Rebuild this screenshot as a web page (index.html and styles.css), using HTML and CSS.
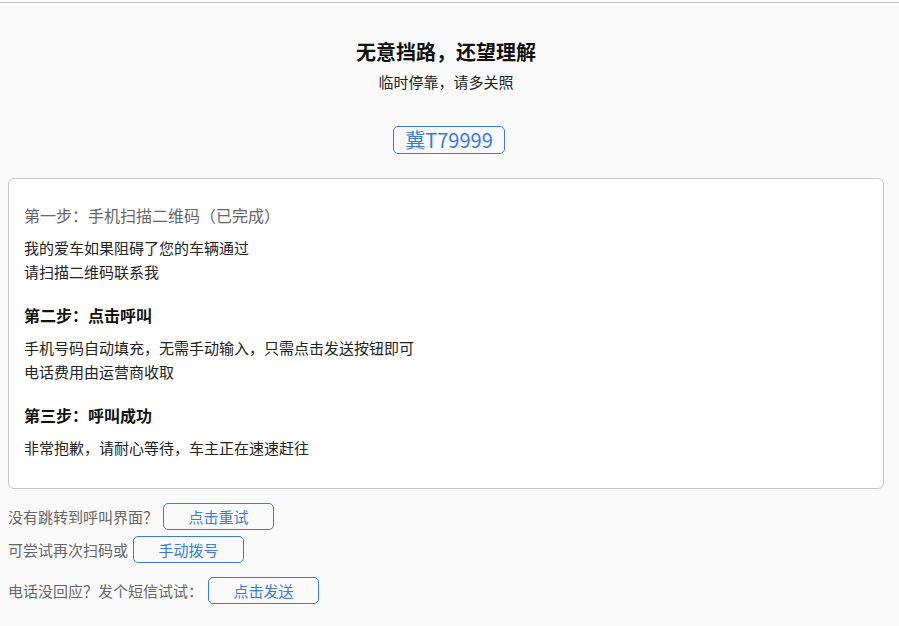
FILE: index.html
```html
<!DOCTYPE html>
<html lang="zh-CN">
<head>
<meta charset="UTF-8">
<meta name="viewport" content="width=device-width, initial-scale=1.0">
<title>挪车</title>
<link rel="stylesheet" href="styles.css">
</head>
<body>
<div class="topline"></div>

<div class="page">
    <div class="header">
        <div class="title">无意挡路，还望理解</div>
        <div class="subtitle">临时停靠，请多关照</div>
        <div class="plate">冀T79999</div>
    </div>

    <div class="card">
        <div class="step">
            <div class="step-title done">第一步：手机扫描二维码（已完成）</div>
            <div class="step-text">我的爱车如果阻碍了您的车辆通过</div>
            <div class="step-text">请扫描二维码联系我</div>
        </div>
        <div class="step">
            <div class="step-title">第二步：点击呼叫</div>
            <div class="step-text">手机号码自动填充，无需手动输入，只需点击发送按钮即可</div>
            <div class="step-text">电话费用由运营商收取</div>
        </div>
        <div class="step">
            <div class="step-title">第三步：呼叫成功</div>
            <div class="step-text">非常抱歉，请耐心等待，车主正在速速赶往</div>
        </div>
    </div>

    <div class="actions">
        <div class="row">没有跳转到呼叫界面？<span class="btn">点击重试</span></div>
        <div class="row">可尝试再次扫码或<span class="btn">手动拨号</span></div>
        <div class="row row-sms">电话没回应？发个短信试试：<span class="btn">点击发送</span></div>
    </div>
</div>
</body>
</html>
```

FILE: styles.css
```css
html, body {
    margin: 0;
    padding: 0;
    background-color: #fafafa;
    font-family: "Noto Sans CJK SC", "Noto Sans", sans-serif;
    color: #222;
}

.topline {
    height: 2px;
    border-bottom: 1px solid #c4c4c4;
}

.page {
    padding: 0 15px 0 8px;
}

.header {
    text-align: center;
    padding-top: 35px;
}

.title {
    font-size: 20px;
    font-weight: bold;
    line-height: 28px;
    color: #111;
}

.subtitle {
    font-size: 15px;
    line-height: 20px;
    margin-top: 6px;
}

.plate {
    display: inline-block;
    margin-top: 34px;
    margin-left: 6px;
    padding: 0 11px;
    font-size: 20px;
    line-height: 26px;
    color: #3b7be0;
    border: 1px solid #3b7be0;
    border-radius: 5px;
}

.card {
    margin-top: 24px;
    background-color: #fff;
    border: 1px solid #c8c8c8;
    border-radius: 6px;
    padding: 24px 15px 28px;
}

.step + .step {
    margin-top: 19px;
}

.step-title {
    font-size: 16px;
    line-height: 24px;
    font-weight: bold;
    margin-bottom: 9px;
    color: #111;
}

.step-title.done {
    font-weight: normal;
    color: #666;
}

.step-text {
    font-size: 15px;
    line-height: 24px;
}

.actions {
    padding-top: 14px;
}

.row {
    display: flex;
    align-items: center;
    font-size: 15px;
    color: #666;
    height: 27px;
}

.row + .row {
    margin-top: 6px;
}

.row.row-sms {
    margin-top: 14px;
}

.btn {
    box-sizing: border-box;
    display: inline-block;
    width: 111px;
    height: 27px;
    line-height: 25px;
    margin-left: 5px;
    text-align: center;
    color: #3b7be0;
    border: 1px solid #3b7be0;
    border-radius: 5px;
    cursor: pointer;
}
```
